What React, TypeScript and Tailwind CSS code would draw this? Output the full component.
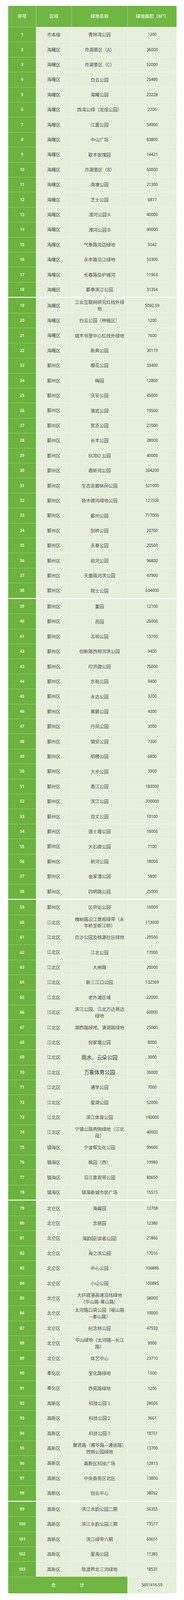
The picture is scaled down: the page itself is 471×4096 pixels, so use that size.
import React from "react";

// 宁波城市绿地清单 (序号, 区域, 绿地名称, 面积)
type Row = [string, string | string[], string, boolean?];

const rows: Row[] = [
  ["市本级", "青林湾公园", "1200"],
  ["海曙区", "月湖景区（A）", "36000"],
  ["海曙区", "月湖景区（C）", "52000"],
  ["海曙区", "白云公园", "25480"],
  ["海曙区", "海曙公园", "23228"],
  ["海曙区", "西湾公绿（龙成公园）", "2700"],
  ["海曙区", "江厦公园", "54900"],
  ["海曙区", "中山广场", "83800"],
  ["海曙区", "联丰玫瑰园", "14421"],
  ["海曙区", "月湖景区（B）", "60000"],
  ["海曙区", "南塘公园", "21300"],
  ["海曙区", "芝士公园", "6817"],
  ["海曙区", "濠河公园 A", "40000"],
  ["海曙区", "濠河公园 B", "40000"],
  ["海曙区", "气象路河边绿地", "5042"],
  ["海曙区", "永丰路沿江绿地", "53300"],
  ["海曙区", "长春路及护城河", "11963"],
  ["海曙区", "鄞奉滨江公园", "31354"],
  ["海曙区", ["工业互联网研究红线外绿", "地"], "5092.59"],
  ["海曙区", "白云公园（种植区）", "1200"],
  ["海曙区", "姚丰邻里中心红线外绿地", "7600"],
  ["海曙区", "新典公园", "30119"],
  ["鄞州区", "樱花公园", "33400"],
  ["鄞州区", "梅园", "12800"],
  ["鄞州区", "庆安公园", "45000"],
  ["鄞州区", "演武公园", "19500"],
  ["鄞州区", "贺丞公园", "21000"],
  ["鄞州区", "长丰公园", "28000"],
  ["鄞州区", "BOBO 公园", "40000"],
  ["鄞州区", "甬新河公园", "364200"],
  ["鄞州区", "生态走廊休闲公园", "521000"],
  ["鄞州区", "杨木碶河绿地公园", "121500"],
  ["鄞州区", "鄞州公园", "717000"],
  ["鄞州区", "剑桥公园", "20700"],
  ["鄞州区", "永泰公园", "20500"],
  ["鄞州区", "前河公园", "96800"],
  ["鄞州区", "天童路河滨公园", "47900"],
  ["鄞州区", "院士公园", "634000"],
  ["鄞州区", "董园", "12100"],
  ["鄞州区", "邑园", "26000"],
  ["鄞州区", "古祠公园", "13100"],
  ["鄞州区", "创新路西侧河滨公园", "9400"],
  ["鄞州区", "印洪碶公园", "76000"],
  ["鄞州区", "东裕公园", "9400"],
  ["鄞州区", "永达公园", "3200"],
  ["鄞州区", "黄鹂公园", "4300"],
  ["鄞州区", "丹凤公园", "3000"],
  ["鄞州区", "镇安公园", "7300"],
  ["鄞州区", "明楼公园", "6800"],
  ["鄞州区", "大步公园", "3900"],
  ["鄞州区", "甬江公园", "183000"],
  ["鄞州区", "滨江公园", "200000"],
  ["鄞州区", "百丈公园", "10100"],
  ["鄞州区", "道士堰公园", "16000"],
  ["鄞州区", "大石碶公园", "7100"],
  ["鄞州区", "新河公园", "18000"],
  ["鄞州区", "金家漕公园", "5800"],
  ["鄞州区", "四明路公园", "25000"],
  ["鄞州区", "区府站公园", "10000"],
  ["江北区", ["槐树路沿江景观绿带（永", "丰桥至新江桥）"], "113000"],
  ["江北区", "白沙公园及桃源社区绿地", "29500"],
  ["江北区", "江北公园", "17000"],
  ["江北区", "大闸路", "20000"],
  ["江北区", "新三江口公园", "132369"],
  ["江北区", "老外滩区域", "22000"],
  ["江北区", ["滨江公园、江北万达周边", "绿地"], "60000"],
  ["江北区", "湖西路绿地、清湖路绿地", "25000"],
  ["江北区", "倪家堰公园", "8000"],
  ["江北区", "雨水、云朵公园", "3000", true],
  ["江北区", "万象体育公园", "35000", true],
  ["江北区", "通学公园", "7000"],
  ["江北区", "星湖公园", "52000"],
  ["江北区", "滨江体育公园", "140000"],
  ["江北区", ["宁镇公路两侧绿地（江北", "段）"], "40000"],
  ["镇海区", "宁波帮文化公园", "99600"],
  ["镇海区", "枫园（西）", "19980"],
  ["镇海区", "沿江景观带公园", "80650"],
  ["镇海区", "镇海新城市民广场", "15515"],
  ["北仑区", "海晨园", "12708"],
  ["北仑区", "念慈园", "12380"],
  ["北仑区", "海韵园(读者公园)", "21866"],
  ["北仑区", "海之滨公园", "17016"],
  ["北仑区", "中心公园", "106886"],
  ["北仑区", "小山公园", "100885"],
  ["北仑区", ["大矸疏港高速沿线绿地", "(华山路-黄山路)"], "58000"],
  ["北仑区", ["太河路口袋公园（岷山路", "—泰山路）"], "10000"],
  ["北仑区", "纪念林公园", "47593"],
  ["北仑区", ["华山绿地（太河路—长江", "路）"], "9000"],
  ["北仑区", "体艺中心", "23710"],
  ["奉化区", "宝化路绿地", "1500"],
  ["奉化区", "西苑路绿地", "1200"],
  ["高新区", "科技公园 1", "28026"],
  ["高新区", "科技公园 2", "3661"],
  ["高新区", "科技公园 3", "18151"],
  ["高新区", ["聚贤路（菁华路—通途路）", "西侧公园绿地"], "13700"],
  ["高新区", "高新区科技广场", "12813"],
  ["高新区", "中央商务区北区", "13800"],
  ["高新区", "创业中心", "38092"],
  ["高新区", "滨江水韵公园二期", "56355"],
  ["高新区", "滨江水韵公园三期", "73577"],
  ["高新区", "滨江绿带六期", "60651"],
  ["高新区", "星海公园", "11385"],
  ["高新区", "陈渡界北三河绿地", "18531"],
];

// the source image was stitched from pages of 20 rows: a thin white gap before these
const pageBreaks = [19, 39, 59, 79, 99];

const cjk = "font-['Noto_Sans_CJK_SC',sans-serif]";
const num = "font-['Open_Sans',sans-serif]";

export default function App() {
  return (
    <div className="min-h-screen bg-white pt-[14.8px]">
      <div className="ml-[20.7px] w-[431.4px]">
        {/* Header */}
        <div className={`flex h-[54.2px] bg-[#6fb642] text-[11.5px] font-bold text-[#dcefca] ${cjk}`}>
          <div className="flex w-[71.6px] items-center justify-center">序号</div>
          <div className="flex w-[90.4px] items-center justify-center border-l border-[#a9d88b]">区域</div>
          <div className="flex w-[143.2px] items-center justify-center border-l border-[#a9d88b]">绿地名称</div>
          <div className="flex w-[126.2px] items-center justify-center border-l border-[#a9d88b]">绿地面积（M²）</div>
        </div>

        {rows.map(([area, name, size, big], i) => {
          const n = i + 1;
          const lines = Array.isArray(name) ? name : [name];
          return (
            <div
              key={n}
              className={`flex h-[38.41px] ${pageBreaks.includes(n) ? "mt-[2.2px]" : ""}`}
            >
              <div className={`flex w-[71.6px] items-center justify-center border-t border-[#95cd73] bg-[#6cb33f] text-[10px] font-bold text-[#e3f4d4] ${num}`}>
                {n}
              </div>
              <div className={`flex w-[90.4px] items-center justify-center border-t border-[#f1f7eb] bg-[#e5efdb] text-[11.4px] text-[#4e4e4e] ${cjk}`}>
                {area}
              </div>
              <div
                className={`flex w-[143.2px] flex-col items-center justify-center whitespace-nowrap border-l border-t border-[#eef5e7] border-t-[#f1f7eb] bg-[#e5efdb] leading-[16.7px] ${cjk} ${
                  big ? "text-[13.2px] text-[#333]" : "text-[11.5px] text-[#4e4e4e]"
                }`}
              >
                {lines.map((l) => (
                  <span key={l}>{l}</span>
                ))}
              </div>
              <div className={`flex w-[126.2px] items-center justify-center border-l border-t border-[#eef5e7] border-t-[#f1f7eb] bg-[#e5efdb] text-[10px] text-[#262626] ${num}`}>
                {size}
              </div>
            </div>
          );
        })}

        {/* Total */}
        <div className="flex h-[43px]">
          <div className={`flex w-[305.2px] items-center justify-center gap-[62px] border-t border-[#95cd73] bg-[#6fb642] text-[11.5px] font-bold text-[#dcefca] ${cjk}`}>
            <span>合</span>
            <span>计</span>
          </div>
          <div className={`flex w-[126.2px] items-center justify-center border-t border-[#f1f7eb] bg-[#e5efdb] text-[10px] text-[#262626] ${num}`}>
            5691416.59
          </div>
        </div>
      </div>
    </div>
  );
}
